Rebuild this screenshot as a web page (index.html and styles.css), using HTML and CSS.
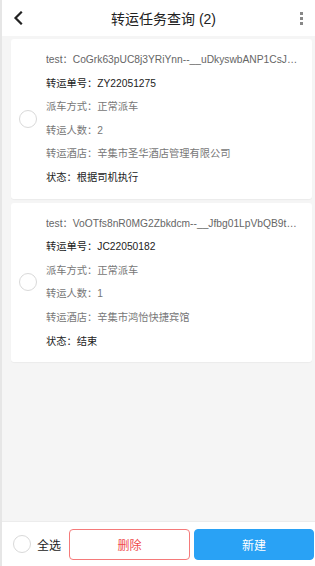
FILE: index.html
```html
<!DOCTYPE html>
<html lang="zh-CN">
<head>
<meta charset="utf-8">
<title>转运任务查询</title>
<link rel="stylesheet" href="styles.css">
</head>
<body>
<div class="page">
  <header class="topbar">
    <svg class="back" width="12" height="14" viewBox="0 0 12 14"><path d="M9 1.5 L3.5 7 L9 12.5" fill="none" stroke="#222" stroke-width="2.2" stroke-linecap="square"/></svg>
    <div class="title">转运任务查询 (2)</div>
    <div class="more"><span></span><span></span><span></span></div>
  </header>
  <main class="list">
    <div class="card">
      <span class="radio"></span>
      <div class="info">
        <div class="line test">test：CoGrk63pUC8j3YRiYnn--__uDkyswbANP1CsJaQm8Xw2</div>
        <div class="line dark">转运单号：ZY22051275</div>
        <div class="line">派车方式：正常派车</div>
        <div class="line">转运人数：2</div>
        <div class="line">转运酒店：辛集市圣华酒店管理有限公司</div>
        <div class="line dark">状态：根据司机执行</div>
      </div>
    </div>
    <div class="card">
      <span class="radio"></span>
      <div class="info">
        <div class="line test">test：VoOTfs8nR0MG2Zbkdcm--__Jfbg01LpVbQB9t1xKa7</div>
        <div class="line dark">转运单号：JC22050182</div>
        <div class="line">派车方式：正常派车</div>
        <div class="line">转运人数：1</div>
        <div class="line">转运酒店：辛集市鸿怡快捷宾馆</div>
        <div class="line dark">状态：结束</div>
      </div>
    </div>
  </main>
  <footer class="bottombar">
    <label class="selall"><span class="radio"></span><span>全选</span></label>
    <button class="btn del">删除</button>
    <button class="btn add">新建</button>
  </footer>
</div>
</body>
</html>
```
FILE: styles.css
```css
* { box-sizing: border-box; }
html, body { margin: 0; padding: 0; }
body {
  font-family: "Liberation Sans", "Noto Sans CJK SC", sans-serif;
  background: #fff;
}
.page {
  width: 315px;
  height: 566px;
  display: flex;
  flex-direction: column;
  border-left: 2px solid #e6e6e6;
}
.topbar {
  height: 36px;
  flex: none;
  display: flex;
  align-items: center;
  justify-content: space-between;
  padding: 0 10px 0 10px;
  background: #fff;
}
.back { display: block; }
.title {
  font-size: 14px;
  color: #222;
  margin-left: 6px;
}
.more {
  display: flex;
  flex-direction: column;
  gap: 2px;
  width: 8px;
  align-items: center;
}
.more span {
  width: 3px;
  height: 3px;
  background: #888;
}
.list {
  flex: 1;
  background: #f5f5f5;
  padding: 3px 3px 0 9px;
  display: flex;
  flex-direction: column;
  gap: 4px;
}
.card {
  background: #fff;
  border-radius: 3px;
  box-shadow: 0 1px 1px rgba(0,0,0,0.04);
  display: flex;
  align-items: center;
  padding: 9px 10px 9px 8px;
}
.radio {
  flex: none;
  width: 18px;
  height: 18px;
  border: 1px solid #d9d9d9;
  border-radius: 50%;
  background: #fff;
}
.info {
  flex: 1;
  min-width: 0;
  margin-left: 9px;
}
.line {
  font-size: 10.25px;
  line-height: 23.6px;
  color: #777;
  white-space: nowrap;
}
.line.test {
  color: #666;
  font-size: 10.25px;
  overflow: hidden;
  text-overflow: ellipsis;
}
.line.dark { color: #222; }
.bottombar {
  height: 45px;
  flex: none;
  border-top: 1px solid #ececec;
  background: #fff;
  display: flex;
  align-items: center;
  padding: 0 1px 0 11px;
}
.selall {
  display: flex;
  align-items: center;
  gap: 6px;
  font-size: 12px;
  color: #222;
  width: 56px;
}
.btn {
  height: 31px;
  border-radius: 4px;
  font-family: inherit;
  font-size: 12px;
  padding: 0;
}
.del {
  width: 121px;
  background: #fff;
  color: #f04a4a;
  border: 1px solid #f57a7a;
}
.add {
  width: 120px;
  margin-left: 4px;
  background: #29a2f5;
  border: 1px solid #29a2f5;
  color: #fff;
}
```
